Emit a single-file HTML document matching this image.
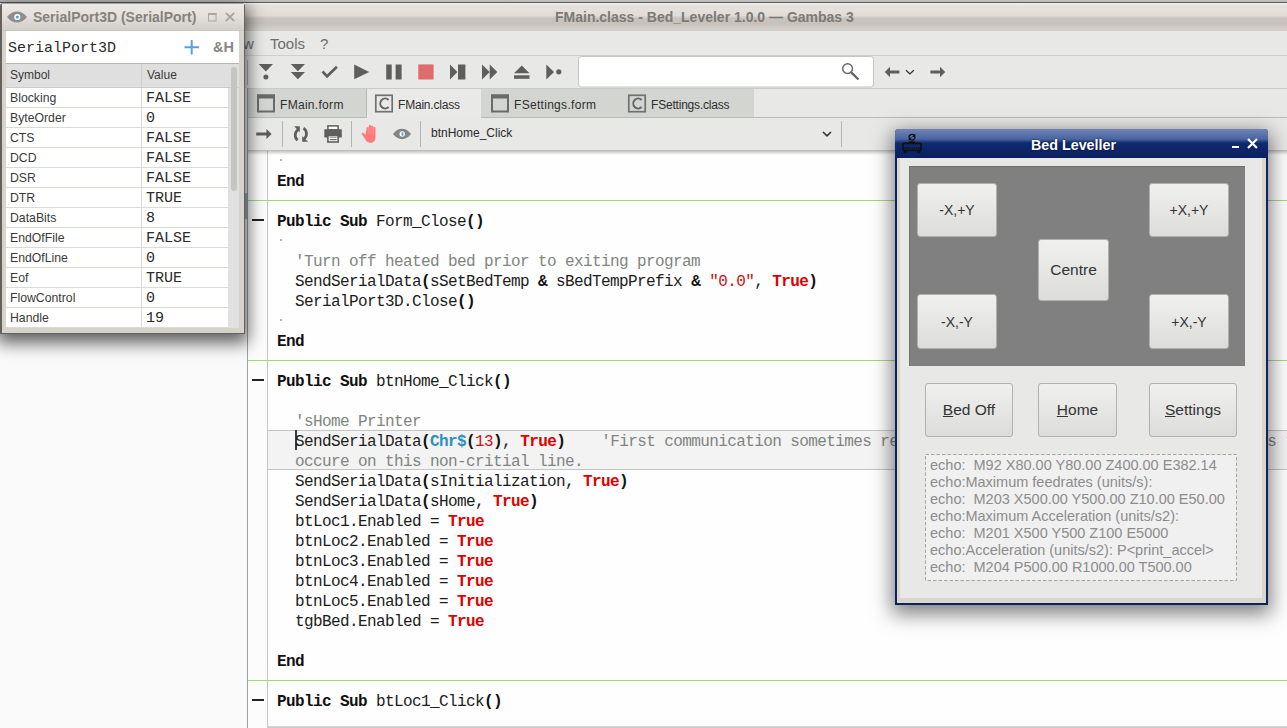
<!DOCTYPE html>
<html><head><meta charset="utf-8">
<style>
*{margin:0;padding:0;box-sizing:border-box}
html,body{width:1287px;height:728px;overflow:hidden;background:#e8e8e7;font-family:"Liberation Sans",sans-serif;position:relative}
.a{position:absolute}
.mono{font-family:"Liberation Mono",monospace}
/* main title */
#topline{left:0;top:0;width:1287px;height:3px;background:linear-gradient(#bdbfbd 0,#bdbfbd 2px,#595959 2px)}
#title{left:244px;top:3px;width:1043px;height:28px;background:linear-gradient(#fbfaf7 0px,#e7e4df 1.5px,#e0dcd6 12.5px,#c8c3bc 15.5px,#c7c2bb 21px,#cfcac4 24px,#d4cfc9 27px,#d4cfc9 28px)}
#title span{position:absolute;left:311px;top:6px;font-weight:bold;font-size:14px;color:#7c7a76;white-space:nowrap}
#menu{left:244px;top:31px;width:1043px;height:25px;background:#e8e8e7;border-bottom:1px solid #cfcfcf}
#menu span{position:absolute;top:4px;font-size:15px;color:#6e6e6e}
#toolbar{left:244px;top:56px;width:1043px;height:33px;background:#e8e8e7;border-bottom:1px solid #cbcbcb}
#tabs{left:244px;top:89px;width:1043px;height:29px;background:#e8e8e7;border-bottom:1px solid #b9bdb6}
.tab{position:absolute;top:0;height:28px;background:#d3d5d0}
.tab.act{background:#e9e9e8;height:29px}
.tt{position:absolute;top:9px;font-size:12px;color:#2e2e2e;letter-spacing:-0.2px}
#subbar{left:244px;top:118px;width:1043px;height:33px;background:#e8e8e7;border-bottom:1px solid #bdbdbd}
.sep{position:absolute;width:1px;background:#b5b5b5}
#leftpanel{left:0;top:88px;width:248px;height:640px;background:#fafafa;border-right:1px solid #9ea39c}
#editor{left:248px;top:151px;width:1039px;height:577px;background:#fefefe;overflow:hidden}
#gutter{left:0;top:0;width:20px;height:577px;background:#fcfcfc;border-right:1px solid #c4c4c4}
#edtop{left:0;top:0;width:1039px;height:4px;background:linear-gradient(rgba(0,0,0,0.22),rgba(0,0,0,0))}
.ln{position:absolute;left:29px;height:20px;line-height:20px;font-family:"Liberation Mono",monospace;font-size:16px;letter-spacing:-0.6px;color:#1c1c1c;white-space:pre}
.b{font-weight:bold;color:#111}
.kw{font-weight:bold;color:#111}
.t{font-weight:bold;color:#e00000}
.n{color:#d01010}
.cm{color:#80857f}
.fn{color:#2e8fc0;font-weight:bold}
.green{position:absolute;left:0;width:1039px;height:1px;background:#9edc6e}
.dot{position:absolute;left:32px;width:2px;height:2px;background:#b4b4b4}
.curline{position:absolute;left:20px;top:279px;width:1019px;height:40px;background:#f3f3f3;border-top:1px solid #c4c4c4;border-bottom:1px solid #c4c4c4}
.fold{position:absolute;left:4px;width:12px;height:2px;background:#222}

#dlgshadow{left:0;top:3px;width:245px;height:331px;box-shadow:0 6px 16px 3px rgba(0,0,0,0.62)}
#dlg{left:0;top:0;width:245px;height:334px;}
#dlg > .a{}
#dlg:before{content:"";box-sizing:border-box;position:absolute;left:0;top:3px;width:245px;height:331px;background:#d6d2cc;border:1px solid #65625d;border-left-width:2px;border-top-color:#a9a59f;border-radius:3px 3px 0 0}
#dlgtitle{left:2px;top:4px;width:242px;height:27px;background:linear-gradient(#ebe9e5,#e4e1dd 45%,#d2cec8);border-bottom:1px solid #c9c5bf}
#dlginput{left:6px;top:31px;width:233px;height:33px;background:#fff;border-bottom:1px solid #b4b9b0}
#dlghdr{left:6px;top:64px;width:233px;height:24px;background:#dfdfdf;border-bottom:1px solid #c9ccc6}
#track{left:228px;top:88px;width:11px;height:240px;background:#e0e0e0}
.hd{font-size:12px;color:#3a3a3a}
.row{position:absolute;left:6px;width:222px;height:20px;background:#fff;border-bottom:1px solid #d9dcd5;font-size:12.25px;color:#3a3a3a}
.row .s{position:absolute;left:4px;top:3px}
.row .v{position:absolute;left:140px;top:2px;font-family:"Liberation Mono",monospace;font-size:15px;color:#2a2a2a}
.row .c{position:absolute;left:135px;top:0;width:1px;height:20px;background:#d9dcd5}
#bed{left:895px;top:129px;width:373px;height:476px;background:#0d2262;border-radius:4px 4px 0 0;box-shadow:0 6px 20px 3px rgba(0,0,0,0.5)}
#bedtitle{left:0;top:0;width:373px;height:29px;border-radius:4px 4px 0 0;background:linear-gradient(#6f84b6 0%,#4a64a0 35%,#0f2a6e 48%,#0b1f5e 100%)}
#bedbody{left:2px;top:29px;width:369px;height:445px;background:#e8e8e7;border-left:3px solid #dad6cc;border-right:4px solid #dad6cc;border-bottom:5px solid #dad6cc}
#bedbody > .a{}
#gpanel{left:9px;top:8px;width:336px;height:200px;background:#808080;border-top:1px solid #707070;border-left:1px solid #707070}
.btn{background:linear-gradient(#f0f0ef,#dcdcdb);border:1px solid #b0b0ae;border-radius:3px;font-size:14px;color:#333;display:flex;align-items:center;justify-content:center}
#gpanel ~ .btn{}
#echo{left:25px;top:296px;width:312px;height:127px;background:#f0f0f0;border:none;font-size:14.5px;line-height:17px;color:#8c8c8c;padding:3px 0 0 5px;white-space:nowrap;overflow:hidden}
</style></head><body>
<div id="topline" class="a"></div>
<div id="title" class="a"><span>FMain.class - Bed_Leveler 1.0.0 — Gambas 3</span></div>
<div id="menu" class="a"><span style="left:-1px">w</span><span style="left:26px">Tools</span><span style="left:76px">?</span></div>
<div id="toolbar" class="a"></div>
<div id="tabs" class="a">
  <div class="tab" style="left:4px;width:119px;border-right:1px solid #b7bbb4"></div>
  <div class="tab act" style="left:123px;width:114px"></div>
  <div class="tab" style="left:237px;width:273px;border-right:none"></div>
  <svg class="a" style="left:0;top:0" width="1043" height="30">
   <g fill="none" stroke="#6a6a6a" stroke-width="2">
    <rect x="14" y="6.5" width="16" height="16"/><rect x="13" y="5.5" width="18" height="4" fill="#6a6a6a" stroke="none"/>
    <rect x="248" y="6.5" width="16" height="16"/><rect x="247" y="5.5" width="18" height="4" fill="#6a6a6a" stroke="none"/>
    <rect x="131.8" y="6.3" width="16.4" height="16.4" stroke-width="1.7" stroke="#707070"/>
    <rect x="384.8" y="6.3" width="16.4" height="16.4" stroke-width="1.7" stroke="#707070"/>
   </g>
   <path d="M144.6 11a4.9 4.9 0 1 0 0 7M397.6 11a4.9 4.9 0 1 0 0 7" fill="none" stroke="#666" stroke-width="2"/>
  </svg>
  <span class="tt" style="left:36px;letter-spacing:0.3px">FMain.form</span>
  <span class="tt" style="left:154px">FMain.class</span>
  <span class="tt" style="left:270px;letter-spacing:0.3px">FSettings.form</span>
  <span class="tt" style="left:407px">FSettings.class</span>
</div>
<div id="subbar" class="a"></div>
<div id="leftpanel" class="a"></div>
<div class="a" style="left:245px;top:193px;width:2px;height:26px;background:#a3b3c8"></div>
<svg class="a" style="left:0;top:0" width="1287" height="151" viewBox="0 0 1287 151">
 <g fill="#5e5e5e">
  <!-- toolbar y 56-88 -->
  <rect x="247" y="60" width="1" height="25" fill="#b0b0b0"/>
  <path d="M258.7 64h14.3l-7.15 7.5z"/><circle cx="265.9" cy="76.9" r="2.5"/>
  <path d="M290.8 64h14.2l-7.1 7.3zM290.8 71.9h14.2l-7.1 7.3z"/>
  <path d="M322.5 71.5l4.6 4.8l9.8-9.6" fill="none" stroke="#5e5e5e" stroke-width="2.6"/>
  <path d="M354.2 64.5v14.8l15-7.4z"/>
  <rect x="386.2" y="64.5" width="5.5" height="15"/><rect x="395.6" y="64.5" width="6" height="15"/>
  <rect x="418.3" y="64.4" width="15.3" height="15.1" fill="#e06b6b"/>
  <path d="M450 64.5v15l7.4-7.5z"/><rect x="458" y="64.5" width="7.4" height="15"/>
  <path d="M482 64.5v15l7.7-7.5zM489.7 64.5v15l7.6-7.5z"/>
  <path d="M514 73.2l7.75-7.8l7.75 7.8z"/><rect x="514" y="75.3" width="15.5" height="3.5"/>
  <path d="M546.3 64.5v15l7.7-7.5z"/><circle cx="558.8" cy="71.8" r="2.6"/>
  <!-- search -->
  <rect x="578.5" y="56.5" width="295" height="30.5" rx="3" fill="#fff" stroke="#c4c4c4"/>
  <circle cx="847.6" cy="68.6" r="4.9" fill="none" stroke="#666" stroke-width="1.4"/>
  <path d="M851.2 72.3l7.3 7.2" stroke="#666" stroke-width="2.4"/>
  <path d="M884.8 72l5.2-5.2v3.6h9.4v3.2h-9.4v3.6z"/>
  <path d="M906 70.2l3.9 3.7l3.9-3.7" fill="none" stroke="#333" stroke-width="1.3"/>
  <path d="M945.2 72l-5.2-5.2v3.6h-9.6v3.2h9.6v3.6z"/>
  <!-- subbar y 118-150 -->
  <path d="M271.6 134l-5.2-5.1v3.7h-10.2v2.8h10.2v3.7z"/>
  <rect x="282" y="121" width="1" height="26" fill="#b5b5b5"/>
  <path d="M298.2 129.6a6.6 6.6 0 0 0-0.6 10.6" fill="none" stroke="#5e5e5e" stroke-width="2.7"/>
  <path d="M294.2 126.3h5.6v5.9z"/>
  <path d="M303.5 128.2a6.6 6.6 0 0 1 0.6 10.6" fill="none" stroke="#5e5e5e" stroke-width="2.7"/>
  <path d="M302.2 136.2v5.5h5.9z"/>
  <rect x="327.9" y="125.9" width="10.2" height="4" fill="#fff" stroke="#5e5e5e" stroke-width="1.5"/>
  <rect x="324.3" y="129.2" width="17.5" height="8.4" rx="0.6"/>
  <rect x="327.9" y="135.5" width="10.2" height="6.5" fill="#fff" stroke="#5e5e5e" stroke-width="1.6"/>
  <rect x="329.6" y="136.8" width="7" height="1" fill="#8a8a8a"/>
  <rect x="329.6" y="139.1" width="7" height="1.1"/>
  <rect x="351" y="121" width="1" height="26" fill="#b5b5b5"/>
  <path fill="#ff7b7b" d="M366.6 128.2c0-1.3 2.2-1.3 2.2 0v-2.3c0-1.3 2.3-1.3 2.3 0v0.8c0-1.3 2.2-1.3 2.2 0v1.2c0-1.2 2.2-1.2 2.2 0.1v9.5c0 3.2-1.8 5.3-5 5.3c-2.6 0-3.9-1.2-5.2-3.3l-3.4-5.2c-0.7-1.2 0.8-2.2 1.7-1.3l1.9 2z"/>
  <path d="M368.8 128v6M371.1 126.7v7.3M373.3 128v6" stroke="#ffa0a0" stroke-width="0.5"/>
  <path d="M393 134c2.6-3.4 5.6-5.2 9-5.2s6.4 1.8 9 5.2c-2.6 3.4-5.6 5.2-9 5.2s-6.4-1.8-9-5.2z" fill="#858585"/>
  <circle cx="402.2" cy="134" r="2.7" fill="#fff"/><ellipse cx="402.5" cy="134" rx="1.1" ry="2" fill="#6aa6e8"/>
  <rect x="420" y="121" width="1" height="26" fill="#b5b5b5"/>
  <path d="M823 132l4 3.8l4-3.8" fill="none" stroke="#333" stroke-width="1.6"/>
  <rect x="841" y="121" width="1" height="26" fill="#b5b5b5"/>
 </g>
</svg>
<span class="a" style="left:431px;top:126px;font-size:12px;color:#2a2a2a">btnHome_Click</span>

<div id="editor" class="a">
  <div id="gutter" class="a"></div>
<div class="curline"></div>
<div style="position:absolute;left:47px;top:279px;width:2px;height:20px;background:#3a3a3a"></div>
<div class="dot" style="top:8px"></div>
<div class="ln" style="top:21px"><span class="b">End</span></div>
<div class="ln" style="top:61px"><span class="kw">Public Sub</span> Form_Close<span class="b">()</span></div>
<div class="dot" style="top:88px"></div>
<div class="ln" style="top:101px">  <span class="cm">'Turn off heated bed prior to exiting program</span></div>
<div class="ln" style="top:121px">  SendSerialData<span class="b">(</span>sSetBedTemp <span class="b">&amp;</span> sBedTempPrefix <span class="b">&amp;</span> <span class="n">"0.0"</span>, <span class="t">True</span><span class="b">)</span></div>
<div class="ln" style="top:141px">  SerialPort3D.Close<span class="b">()</span></div>
<div class="dot" style="top:168px"></div>
<div class="ln" style="top:181px"><span class="b">End</span></div>
<div class="ln" style="top:221px"><span class="kw">Public Sub</span> btnHome_Click<span class="b">()</span></div>
<div class="ln" style="top:261px">  <span class="cm">'sHome Printer</span></div>
<div class="ln" style="top:281px">  SendSerialData<span class="b">(</span><span class="fn">Chr$</span><span class="b">(</span><span class="n">13</span><span class="b">)</span>, <span class="t">True</span><span class="b">)</span>    <span class="cm">'First communication sometimes returns garbage data, so let errors happen s t</span></div>
<div class="ln" style="top:301px">  <span class="cm">occure on this non-critial line.</span></div>
<div class="ln" style="top:321px">  SendSerialData<span class="b">(</span>sInitialization, <span class="t">True</span><span class="b">)</span></div>
<div class="ln" style="top:341px">  SendSerialData<span class="b">(</span>sHome, <span class="t">True</span><span class="b">)</span></div>
<div class="ln" style="top:361px">  btLoc1.Enabled = <span class="t">True</span></div>
<div class="ln" style="top:381px">  btnLoc2.Enabled = <span class="t">True</span></div>
<div class="ln" style="top:401px">  btnLoc3.Enabled = <span class="t">True</span></div>
<div class="ln" style="top:421px">  btnLoc4.Enabled = <span class="t">True</span></div>
<div class="ln" style="top:441px">  btnLoc5.Enabled = <span class="t">True</span></div>
<div class="ln" style="top:461px">  tgbBed.Enabled = <span class="t">True</span></div>
<div class="ln" style="top:501px"><span class="b">End</span></div>
<div class="ln" style="top:541px"><span class="kw">Public Sub</span> btLoc1_Click<span class="b">()</span></div>
<div class="green" style="top:49px"></div>
<div class="green" style="top:209px"></div>
<div class="green" style="top:529px"></div>
<div class="fold" style="top:68px"></div>
<div class="fold" style="top:228px"></div>
<div class="fold" style="top:548px"></div>
<div id="edtop" class="a"></div>
<div class="a" style="left:20px;top:575px;width:1019px;height:2px;background:linear-gradient(#dcdcdc,#c4c4c4)"></div>
</div>

<div id="dlgshadow" class="a"></div>
<div id="dlg" class="a">
  <div id="dlgtitle" class="a"></div>
  <span class="a" style="left:33px;top:9px;font-size:14px;font-weight:bold;color:#85827c;white-space:nowrap">SerialPort3D (SerialPort)</span>
  <div id="dlginput" class="a"></div>
  <svg class="a" style="left:0;top:0" width="245" height="64">
    <path d="M7 17c3-4 6.5-5.6 10-5.6s7 1.6 10 5.6c-3 4-6.5 5.6-10 5.6s-7-1.6-10-5.6z" fill="#8e8e8e"/>
    <circle cx="17.3" cy="17" r="3.1" fill="#fff"/><circle cx="17.3" cy="17" r="1.6" fill="#5a9de0"/>
    <rect x="208.5" y="13.5" width="7.5" height="7.5" fill="none" stroke="#aaa6a0" stroke-width="1"/><rect x="208" y="13" width="8.5" height="2" fill="#aaa6a0"/>
    <path d="M225.8 12.8l8.4 8.4M234.2 12.8l-8.4 8.4" stroke="#a4a09a" stroke-width="1.7"/>
    <path d="M184.5 47.3h14.5M191.7 40v14.6" stroke="#5b9ee0" stroke-width="2"/>
  </svg>
  <span class="a mono" style="left:8px;top:40px;font-size:15px;color:#2a2a2a">SerialPort3D</span>
  <span class="a" style="left:213px;top:39px;font-size:14.5px;font-weight:bold;color:#8a8784">&amp;H</span>
  <div id="dlghdr" class="a"></div>
  <span class="a hd" style="left:10px;top:68px">Symbol</span><span class="a hd" style="left:147px;top:68px">Value</span>
  <div class="a" style="left:141px;top:64px;width:1px;height:23px;background:#cfd2cc"></div>
  <div class="row" style="top:88px"><span class="s">Blocking</span><div class="c"></div><span class="v">FALSE</span></div>
  <div class="row" style="top:108px"><span class="s">ByteOrder</span><div class="c"></div><span class="v">0</span></div>
  <div class="row" style="top:128px"><span class="s">CTS</span><div class="c"></div><span class="v">FALSE</span></div>
  <div class="row" style="top:148px"><span class="s">DCD</span><div class="c"></div><span class="v">FALSE</span></div>
  <div class="row" style="top:168px"><span class="s">DSR</span><div class="c"></div><span class="v">FALSE</span></div>
  <div class="row" style="top:188px"><span class="s">DTR</span><div class="c"></div><span class="v">TRUE</span></div>
  <div class="row" style="top:208px"><span class="s">DataBits</span><div class="c"></div><span class="v">8</span></div>
  <div class="row" style="top:228px"><span class="s">EndOfFile</span><div class="c"></div><span class="v">FALSE</span></div>
  <div class="row" style="top:248px"><span class="s">EndOfLine</span><div class="c"></div><span class="v">0</span></div>
  <div class="row" style="top:268px"><span class="s">Eof</span><div class="c"></div><span class="v">TRUE</span></div>
  <div class="row" style="top:288px"><span class="s">FlowControl</span><div class="c"></div><span class="v">0</span></div>
  <div class="row" style="top:308px"><span class="s">Handle</span><div class="c"></div><span class="v">19</span></div>
  <div id="track" class="a"></div>
  <div class="a" style="left:231px;top:67px;width:6px;height:124px;border-radius:3px;background:#c4c6c4"></div>
</div>
<div id="bed" class="a">
  <div id="bedtitle" class="a">
    <svg class="a" style="left:6px;top:4px" width="22" height="21" viewBox="0 0 22 21">
      <path d="M7.9 4.6a3.1 3.1 0 0 1 5.3-2.2" stroke="#111" stroke-width="1.3" fill="none"/><path d="M14.4 0.6v3.4h-3.4z" fill="#111"/>
      <path d="M14.1 3.9a3.1 3.1 0 0 1-5.3 2.2" stroke="#111" stroke-width="1.3" fill="none"/><path d="M7.6 7.9v-3.4h3.4z" fill="#111"/>
      <rect x="8" y="8.3" width="6" height="2" fill="#111"/>
      <rect x="1.9" y="10.4" width="18.2" height="7" rx="1.8" fill="none" stroke="#111" stroke-width="1.7"/>
      <path d="M2.5 15.2h17" stroke="#111" stroke-width="1.4" stroke-dasharray="1.2 0.9"/>
      <rect x="2.3" y="17.5" width="3.8" height="2.6" rx="1" fill="#111"/><rect x="15.9" y="17.5" width="3.8" height="2.6" rx="1" fill="#111"/>
    </svg>
    <span class="a" style="left:136px;top:8px;font-size:14.3px;font-weight:bold;color:#fff;text-shadow:0 0 2px rgba(0,0,30,0.8);white-space:nowrap">Bed Leveller</span>
    <div class="a" style="left:337px;top:17px;width:7px;height:2px;background:#fff"></div>
    <svg class="a" style="left:352px;top:9px" width="11" height="11" viewBox="0 0 11 11"><path d="M1 1L10 10M10 1L1 10" stroke="#fff" stroke-width="2.2"/></svg>
  </div>
  <div id="bedbody" class="a">
    <div id="gpanel" class="a"></div>
    <div class="btn a" style="left:17px;top:25px;width:80px;height:54px"><span>-X,+Y</span></div>
    <div class="btn a" style="left:249px;top:25px;width:80px;height:54px"><span>+X,+Y</span></div>
    <div class="btn a" style="left:138px;top:81px;width:71px;height:62px;font-size:15.5px"><span>Centre</span></div>
    <div class="btn a" style="left:17px;top:136px;width:80px;height:55px"><span>-X,-Y</span></div>
    <div class="btn a" style="left:249px;top:136px;width:80px;height:55px"><span>+X,-Y</span></div>
    <div class="btn b2 a" style="font-size:15.5px;left:25px;top:225px;width:88px;height:54px"><span><u>B</u>ed Off</span></div>
    <div class="btn b2 a" style="font-size:15.5px;left:138px;top:225px;width:79px;height:54px"><span><u>H</u>ome</span></div>
    <div class="btn b2 a" style="font-size:15.5px;left:249px;top:225px;width:88px;height:54px"><span><u>S</u>ettings</span></div>
    <div id="echo" class="a">echo:&nbsp; M92 X80.00 Y80.00 Z400.00 E382.14<br>echo:Maximum feedrates (units/s):<br>echo:&nbsp; M203 X500.00 Y500.00 Z10.00 E50.00<br>echo:Maximum Acceleration (units/s2):<br>echo:&nbsp; M201 X500 Y500 Z100 E5000<br>echo:Acceleration (units/s2): P&lt;print_accel&gt;<br>echo:&nbsp; M204 P500.00 R1000.00 T500.00</div>
    <svg class="a" style="left:25px;top:296px" width="312" height="127"><rect x="0.5" y="0.5" width="311" height="126" fill="none" stroke="#a4a4a4" stroke-dasharray="3.5 2"/></svg>
  </div>
</div>

</body></html>
